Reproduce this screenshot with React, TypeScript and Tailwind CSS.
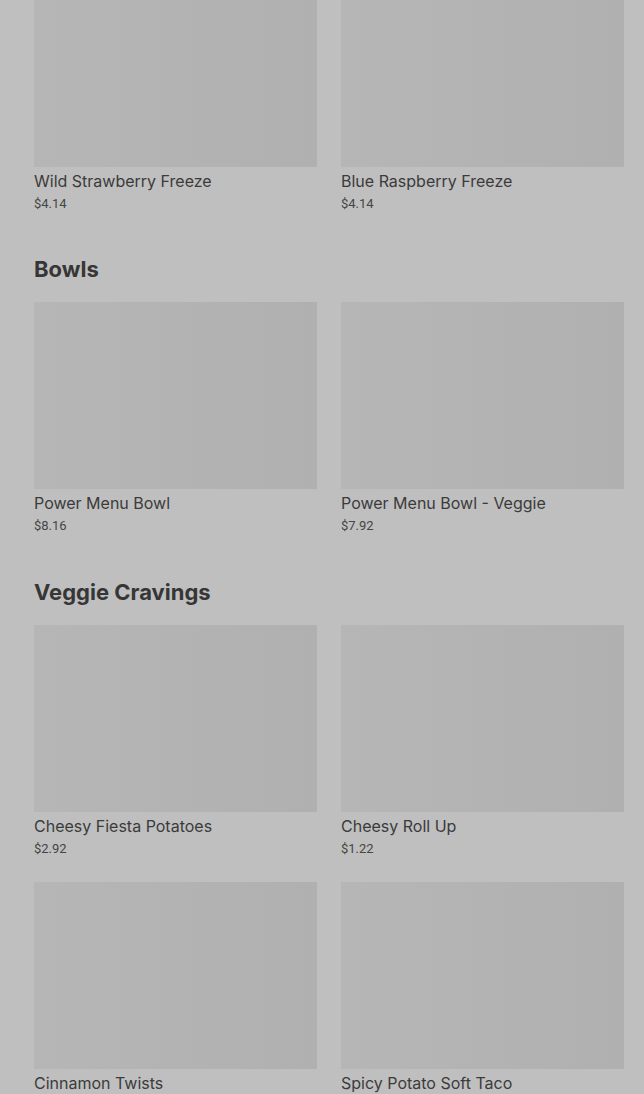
const sections: { title?: string; spacing: string; items: { name: string; price: string }[] }[] = [
    {
        spacing: "",
        items: [
            { name: "Wild Strawberry Freeze", price: "$4.14" },
            { name: "Blue Raspberry Freeze", price: "$4.14" },
        ],
    },
    {
        title: "Bowls",
        spacing: "mt-[41px]",
        items: [
            { name: "Power Menu Bowl", price: "$8.16" },
            { name: "Power Menu Bowl - Veggie", price: "$7.92" },
        ],
    },
    {
        title: "Veggie Cravings",
        spacing: "mt-[42px]",
        items: [
            { name: "Cheesy Fiesta Potatoes", price: "$2.92" },
            { name: "Cheesy Roll Up", price: "$1.22" },
            { name: "Cinnamon Twists", price: "$1.22" },
            { name: "Spicy Potato Soft Taco", price: "$1.87" },
        ],
    },
]

const MenuCard = ({ name, price }: { name: string; price: string }) => (
    <div className="flex flex-col">
        <div className="h-[187px] w-full bg-gradient-to-r from-[#b6b6b6] to-[#b0b0b0]" />
        <p className="mt-[2px] text-[16px] leading-6 text-[#3b3b3b] font-['Inter',sans-serif]">{name}</p>
        <p className="mt-[1px] text-[13px] leading-5 text-[#454545] font-['Roboto',sans-serif]">{price}</p>
    </div>
)

export default function App() {
    return (
        <div className="h-[1094px] overflow-hidden bg-[#bfbfbf]">
            <div className="-mt-[20px] pl-[34px] pr-[20px] flex flex-col">
                {sections.map((section, i) => (
                    <section key={i} className={section.spacing}>
                        {section.title && (
                            <h2 className="mb-[19px] text-[22px] leading-[28px] font-bold text-[#363636] font-['Inter',sans-serif]">
                                {section.title}
                            </h2>
                        )}
                        <div className="grid grid-cols-2 gap-x-[24px] gap-y-[23px]">
                            {section.items.map((item) => (
                                <MenuCard key={item.name} name={item.name} price={item.price} />
                            ))}
                        </div>
                    </section>
                ))}
            </div>
        </div>
    )
}
